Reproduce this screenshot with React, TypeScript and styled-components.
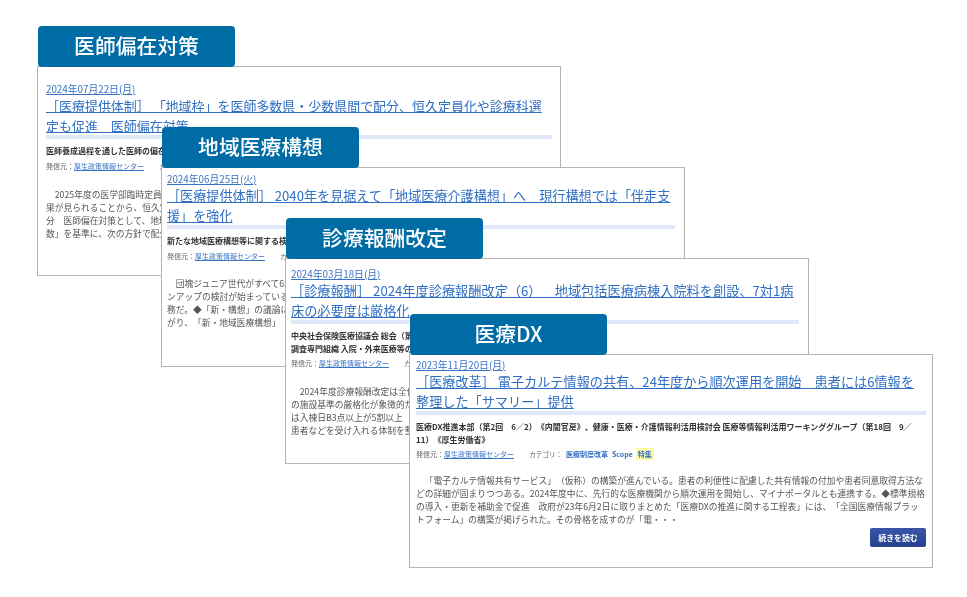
import React from "react";
import styled, { createGlobalStyle } from "styled-components";

type Article = {
  label: string;
  x: number;
  y: number;
  height: number;
  padTop: number;
  padLeft: number;
  padRight: number;
  bodyGap: number;
  titleSize: number;
  date: string;
  title: string[];
  lead: string[];
  tags?: boolean;
  body: string[];
  more?: boolean;
};

const articles: Article[] = [
  {
    label: "医師偏在対策",
    x: 37,
    y: 26,
    height: 210,
    padTop: 15,
    padLeft: 8,
    padRight: 8,
    bodyGap: 16,
    titleSize: 12.97,
    date: "2024年07月22日(月)",
    title: [
      "［医療提供体制］ 「地域枠」を医師多数県・少数県間で配分、恒久定員化や診療科選",
      "定も促進　医師偏在対策",
    ],
    lead: ["医師養成過程を通した医師の偏在対策等に関する検討会"],
    body: [
      "　2025年度の医学部臨時定員",
      "果が見られることから、恒久定員",
      "分　医師偏在対策として、地域",
      "数」を基準に、次の方針で配分",
    ],
  },
  {
    label: "地域医療構想",
    x: 161,
    y: 127,
    height: 200,
    padTop: 4,
    padLeft: 5,
    padRight: 9,
    bodyGap: 15,
    titleSize: 13.12,
    date: "2024年06月25日(火)",
    title: [
      "［医療提供体制］ 2040年を見据えて「地域医療介護構想」へ　現行構想では「伴走支",
      "援」を強化",
    ],
    lead: ["新たな地域医療構想等に関する検討会（第7回　8／26）《厚生労働省》"],
    body: [
      "　団塊ジュニア世代がすべて65歳",
      "ンアップの検討が始まっている",
      "務だ。◆「新・構想」の議論に",
      "がり、「新・地域医療構想」",
    ],
  },
  {
    label: "診療報酬改定",
    x: 285,
    y: 218,
    height: 206,
    padTop: 8,
    padLeft: 5,
    padRight: 9,
    bodyGap: 16,
    titleSize: 13.2,
    date: "2024年03月18日(月)",
    title: [
      "［診療報酬］ 2024年度診療報酬改定（6）　地域包括医療病棟入院料を創設、7対1病",
      "床の必要度は厳格化",
    ],
    lead: [
      "中央社会保険医療協議会 総会（第584回　2／14）、中央社会保険医療協議会 診療報酬",
      "調査専門組織 入院・外来医療等の調査・評価分科会《厚生労働省》",
    ],
    body: [
      "　2024年度診療報酬改定は全体",
      "の施設基準の厳格化が象徴的だ",
      "は入棟日B3点以上が5割以上",
      "患者などを受け入れる体制を整",
    ],
  },
  {
    label: "医療DX",
    x: 409,
    y: 314,
    height: 214,
    padTop: 3,
    padLeft: 6,
    padRight: 6,
    bodyGap: 14,
    titleSize: 13.15,
    date: "2023年11月20日(月)",
    title: [
      "［医療改革］ 電子カルテ情報の共有、24年度から順次運用を開始　患者には6情報を",
      "整理した「サマリー」提供",
    ],
    lead: [
      "医療DX推進本部（第2回　6／2）《内閣官房》、健康・医療・介護情報利活用検討会 医療等情報利活用ワーキンググループ（第18回　9／",
      "11）《厚生労働省》",
    ],
    tags: true,
    body: [
      "　「電子カルテ情報共有サービス」（仮称）の構築が進んでいる。患者の利便性に配慮した共有情報の付加や患者同意取得方法な",
      "どの詳細が固まりつつある。2024年度中に、先行的な医療機関から順次運用を開始し、マイナポータルとも連携する。◆標準規格",
      "の導入・更新を補助金で促進　政府が23年6月2日に取りまとめた「医療DXの推進に関する工程表」には、「全国医療情報プラッ",
      "トフォーム」の構築が掲げられた。その骨格を成すのが「電・・・",
    ],
    more: true,
  },
];

const GlobalStyle = createGlobalStyle`
  html, body {
    margin: 0;
    background: #fff;
  }
  body {
    font-family: "Noto Sans CJK JP", "Liberation Sans", sans-serif;
    text-spacing-trim: space-all;
  }
`;

/* the reference is a scaled-down slide, so everything is slightly soft */
const Canvas = styled.div`
  position: relative;
  width: 967px;
  height: 597px;
  overflow: hidden;
  background: #fff;
  filter: blur(0.35px);
`;

const Panel = styled.section<{ $x: number; $y: number }>`
  position: absolute;
  left: ${(p) => p.$x}px;
  top: ${(p) => p.$y}px;
  display: flex;
  flex-direction: column;
  width: 524px;
`;

const Tab = styled.h2`
  display: flex;
  align-items: center;
  justify-content: center;
  box-sizing: border-box;
  width: 197px;
  height: 41px;
  margin: 0 0 -1px 1px;
  padding-bottom: 2px;
  position: relative;
  z-index: 1;
  border-radius: 4px;
  background: #006ca5;
  color: #fff;
  font-size: 20.8px;
  font-weight: 500;
  line-height: 1;
`;

const Card = styled.div<{ $height: number; $padTop: number; $padLeft: number; $padRight: number }>`
  display: flex;
  flex-direction: column;
  box-sizing: border-box;
  height: ${(p) => p.$height}px;
  padding: ${(p) => p.$padTop}px ${(p) => p.$padRight}px 0 ${(p) => p.$padLeft}px;
  border: 1px solid #b4b4b4;
  background: #fff;
  overflow: hidden;
`;

const DateLink = styled.a`
  display: block;
  font-size: 9.8px;
  line-height: 14px;
  color: #3a74c4;
  text-decoration: underline;
`;

const Title = styled.a<{ $size: number }>`
  display: block;
  font-size: ${(p) => p.$size}px;
  line-height: 19.5px;
  color: #2f6fc4;
  text-decoration: underline;
  white-space: nowrap;
  &:first-of-type {
    margin-top: -1px;
  }
`;

const Rule = styled.div`
  flex: none;
  height: 4px;
  margin: 0 0 6px;
  background: #dfe7f8;
`;

const Lead = styled.div`
  font-size: 8px;
  font-weight: 700;
  line-height: 12.5px;
  color: #333;
  white-space: nowrap;
`;

const Source = styled.div`
  display: flex;
  align-items: center;
  margin-top: 2px;
  font-size: 7px;
  line-height: 12px;
  color: #666;
  white-space: nowrap;
`;

const SourceLink = styled.a`
  color: #3a74c4;
  text-decoration: underline;
`;

const Category = styled.span`
  margin-left: 15px;
  letter-spacing: -0.4px;
`;

const Tag = styled.a<{ $mark?: boolean }>`
  margin-left: ${(p) => (p.$mark ? 3 : 4)}px;
  padding: 0 ${(p) => (p.$mark ? 2 : 0)}px;
  background: ${(p) => (p.$mark ? "#fdf9a8" : "transparent")};
  color: #2f6fc4;
  font-weight: 700;
`;

const Body = styled.div<{ $gap: number }>`
  margin-top: ${(p) => p.$gap}px;
  font-size: 8.75px;
  line-height: 13px;
  color: #555;
  white-space: nowrap;
`;

const MoreRow = styled.div`
  display: flex;
  justify-content: flex-end;
  margin-top: 2px;
`;

const MoreButton = styled.a`
  display: flex;
  align-items: center;
  justify-content: center;
  width: 56px;
  height: 19px;
  border-radius: 2px;
  background: linear-gradient(#3a55a8, #27408f);
  color: #fff;
  font-size: 7.8px;
  font-weight: 700;
`;

const App = () => (
  <Canvas>
    <GlobalStyle />
    {articles.map((a) => (
      <Panel key={a.label} $x={a.x} $y={a.y}>
        <Tab>{a.label}</Tab>
        <Card $height={a.height} $padTop={a.padTop} $padLeft={a.padLeft} $padRight={a.padRight}>
          <DateLink>{a.date}</DateLink>
          {a.title.map((line) => (
            <Title key={line} $size={a.titleSize}>
              {line}
            </Title>
          ))}
          <Rule />
          {a.lead.map((line) => (
            <Lead key={line}>{line}</Lead>
          ))}
          <Source>
            発信元：<SourceLink>厚生政策情報センター</SourceLink>
            <Category>カテゴリ：</Category>
            {a.tags && (
              <>
                <Tag>医療制度改革</Tag>
                <Tag>Scope</Tag>
                <Tag $mark>特集</Tag>
              </>
            )}
          </Source>
          <Body $gap={a.bodyGap}>
            {a.body.map((line) => (
              <div key={line}>{line}</div>
            ))}
          </Body>
          {a.more && (
            <MoreRow>
              <MoreButton>続きを読む</MoreButton>
            </MoreRow>
          )}
        </Card>
      </Panel>
    ))}
  </Canvas>
);

export default App;
